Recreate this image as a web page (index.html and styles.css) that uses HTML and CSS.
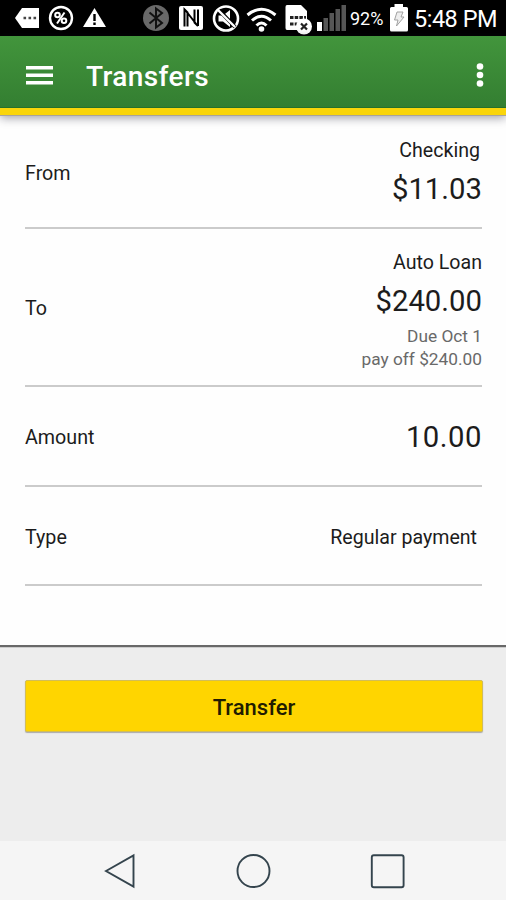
FILE: index.html
```html
<!DOCTYPE html>
<html lang="en">
<head>
<meta charset="utf-8">
<title>Transfers</title>
<link rel="stylesheet" href="styles.css">
</head>
<body>
<div class="screen">
  <div class="status">
    <svg class="tray" width="348" height="36" viewBox="0 0 348 36">
      <path fill="#fff" d="M15 18L22 8H39V28H22Z"/>
      <path stroke="#444" stroke-width="2.4" stroke-dasharray="2.6 2.4" d="M23.5 18H37"/>
      <circle cx="61" cy="18" r="11" fill="none" stroke="#fff" stroke-width="2.4"/>
      <g fill="none" stroke="#fff" stroke-width="2"><circle cx="57.5" cy="15" r="2.3"/><circle cx="64" cy="20.8" r="2.3"/><path d="M64.5 12.5L57 23.5"/></g>
      <path fill="#fff" d="M94.500 8L106 27H83Z"/>
      <path stroke="#000" stroke-width="2.4" d="M94.500 14V21M94.500 22.500V25"/>
      <circle cx="156" cy="18" r="13" fill="#696969"/>
      <path fill="none" stroke="#111" stroke-width="2" d="M149.500 12.500L162 23L156 27.500V8.500L162 13L149.500 23.500"/>
      <rect x="179" y="6" width="24" height="24" rx="2" fill="#fff"/>
      <path fill="none" stroke="#000" stroke-width="2" d="M184.500 26.500V9.500L187.500 12.500V26.500M186 11L197 25M198 26V9.500M198 26L194.500 22.500V9.500"/>
      <circle cx="226" cy="18.500" r="12" fill="none" stroke="#fff" stroke-width="2.600"/>
      <path fill="#fff" d="M218.500 15.500H223L230 10V27L223 21.500H218.500Z"/>
      <path stroke="#000" stroke-width="4" d="M219 10L235 27"/>
      <path stroke="#fff" stroke-width="2.400" d="M218 10L235 27"/>
      <g fill="none" stroke="#fff" stroke-width="3"><path d="M247.500 15Q261.500 3.500 275.500 15"/><path d="M252 20.500Q261.500 12 271 20.500"/><path d="M256.500 25.500Q261.500 20.500 266.500 25.500"/></g>
      <circle cx="261.500" cy="29" r="2.800" fill="#fff"/>
      <path fill="#fff" d="M287 5H301L307 11V30H287Q285.500 30 285.500 28V7Q285.500 5 287 5Z"/>
      <path stroke="#222" stroke-width="3" stroke-dasharray="3.500 1.200" d="M290 17.500H306M290 24H300"/>
      <circle cx="304" cy="26.500" r="8" fill="#fff"/>
      <path stroke="#222" stroke-width="2.200" d="M301 23.500L307 29.500M307 23.500L301 29.500"/>
      <path fill="#fff" d="M317 22H322V31H317Z"/>
      <path fill="#565656" d="M323.500 18H328V31H323.500ZM329.500 13H334V31H329.500ZM335.500 9H340V31H335.500ZM341.500 5H346V31H341.500Z"/>
    </svg>
    <span class="percent">92%</span>
    <svg class="battery" width="20" height="36" viewBox="0 0 20 36">
      <path fill="#fff" d="M5.500 4H14V7H17.500Q19 7 19 8.500V30Q19 31.500 17.500 31.500H2.500Q1 31.500 1 30V8.500Q1 7 2.500 7H5.500Z"/>
      <path fill="#eee" stroke="#999" stroke-width=".9" d="M8 12H14L12 17H15L7.500 26L9 20H5.500Z"/>
    </svg>
    <span class="clock">5:48 PM</span>
  </div>
  <header class="toolbar">
    <svg class="menu" width="27" height="20" viewBox="0 0 27 20"><path fill="#fff" d="M0 0H27V3.500H0ZM0 7.500H27V11H0ZM0 15H27V18.500H0Z"/></svg>
    <h1>Transfers</h1>
    <svg class="more" width="8" height="26" viewBox="0 0 8 26"><g fill="#fff"><circle cx="4" cy="4.500" r="3.300"/><circle cx="4" cy="13" r="3.300"/><circle cx="4" cy="21.500" r="3.300"/></g></svg>
  </header>
  <main class="form">
    <div class="row from">
      <span class="label">From</span>
      <div class="value"><span class="name checking">Checking</span><span class="money">$11.03</span></div>
    </div>
    <div class="row to">
      <span class="label">To</span>
      <div class="value"><span class="name">Auto Loan</span><span class="money">$240.00</span><span class="note due">Due Oct 1</span><span class="note">pay off $240.00</span></div>
    </div>
    <div class="row amount">
      <span class="label">Amount</span>
      <div class="value"><span class="money entry">10.00</span></div>
    </div>
    <div class="row type">
      <span class="label">Type</span>
      <div class="value"><span class="name regular">Regular payment</span></div>
    </div>
  </main>
  <section class="actions"><button class="transfer">Transfer</button></section>
  <nav class="nav">
    <svg width="506" height="59" viewBox="0 0 506 59"><g fill="none" stroke="#34444d" stroke-width="1.900"><path d="M106 30L133.500 14.500V45.500Z"/><circle cx="253.500" cy="30" r="16"/><rect x="371.800" y="14.200" width="31.800" height="32" rx="2"/></g></svg>
  </nav>
</div>
</body>
</html>
```

FILE: styles.css
```css
* { box-sizing: border-box; }
body { margin: 0; font-family: Roboto, sans-serif; color: #1c1c1c; }
.screen { width: 506px; height: 900px; display: flex; flex-direction: column; overflow: hidden; background: #fefefe; }
.status { height: 36px; flex: none; display: flex; background: #000; color: #fff; line-height: 38px; white-space: nowrap; }
.tray, .battery { display: block; flex: none; }
.percent { width: 41px; padding-left: 2px; font-size: 18px; }
.clock { padding-left: 5px; font-size: 23.5px; letter-spacing: -0.5px; }
.toolbar { height: 80px; flex: none; display: flex; align-items: flex-start; background: linear-gradient(#42953c, #327c30); border-bottom: 1px solid #aaa49b; box-shadow: inset 0 -7px #fad50a, inset 0 -8px #28702a, 0 2px 9px rgba(20, 20, 40, .4); background-clip: padding-box; }
.menu { margin: 30px 0 0 26px; }
h1 { margin: 24px 0 0 33px; font-size: 28px; line-height: 34px; font-weight: 500; letter-spacing: 0.4px; color: #fff; }
.more { margin: 26px 22px 0 auto; }
.form { height: 529px; flex: none; padding: 0 24px 0 25px; }
.row { display: flex; justify-content: space-between; align-items: center; border-bottom: 2px solid #cbcbcb; }
.from { height: 113px; }
.to { height: 158px; }
.amount { height: 100px; }
.type { height: 99px; }
.label { padding-top: 4px; font-size: 19.7px; line-height: 24px; }
.value { display: flex; flex-direction: column; align-items: flex-end; }
.name { padding-top: 1px; margin-bottom: -1px; font-size: 19.6px; line-height: 24px; }
.money { font-size: 29.3px; line-height: 34px; }
.from .value { gap: 10px; padding-top: 1px; }
.to .value { padding-top: 6px; }
.to .money { margin: 10px 0 7px; }
.entry { padding-top: 2px; letter-spacing: 0.5px; }
.checking { margin-right: 2px; }
.note { font-size: 17.3px; line-height: 23px; color: #696969; }
.regular { margin: 0 5px 0 0; padding-top: 4px; }
.actions { height: 196px; flex: none; border-top: 2px solid #686868; background: #ededed; padding: 33px 23px 0 25px; box-shadow: inset 0 1px #ccc; }
.transfer { display: block; width: 100%; height: 52px; border: 1px solid #d2bd58; border-radius: 2px; background: #ffd500; box-shadow: 0 1px 1px #aaa; padding: 4px 0 0; font: 500 22px/26px Roboto, sans-serif; color: #211c00; }
.nav { height: 59px; flex: none; background: #f5f5f5; }
.nav svg { display: block; }
```
